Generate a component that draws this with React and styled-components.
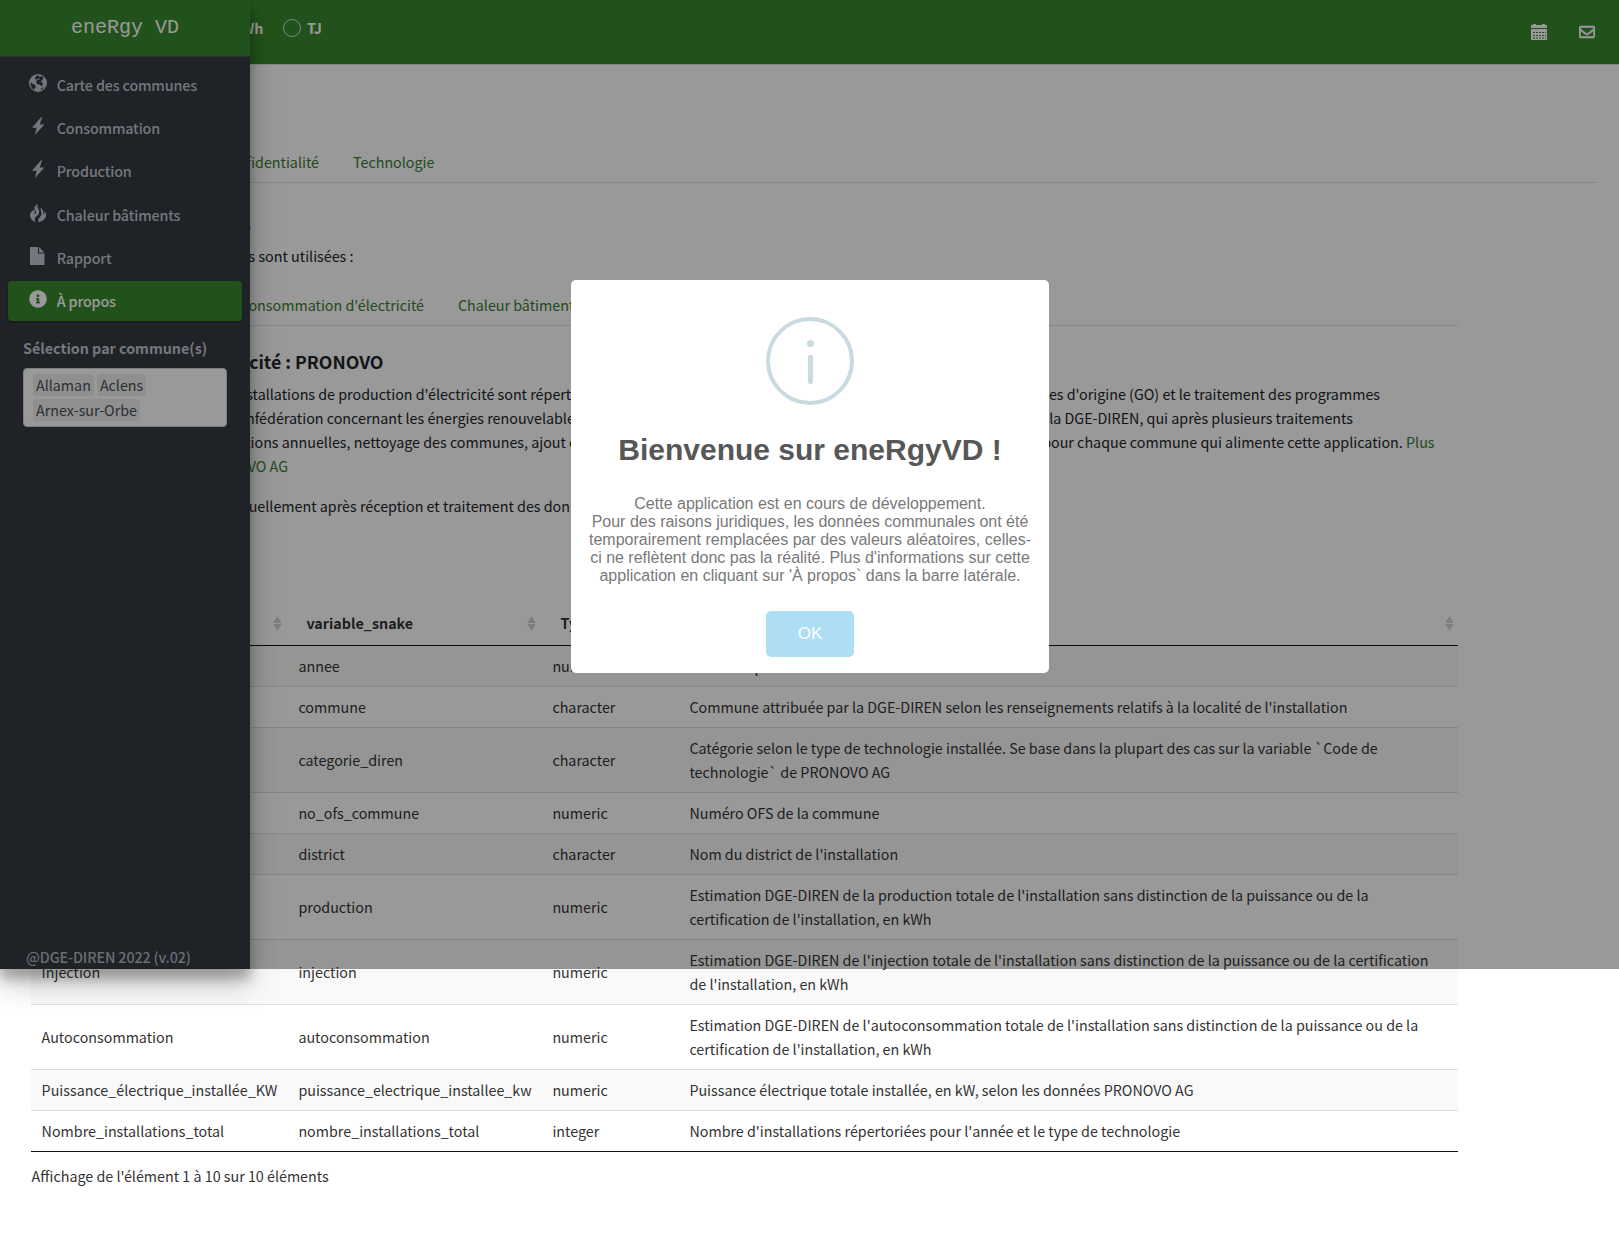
import React from 'react';
import styled, { createGlobalStyle, css } from 'styled-components';
import { FaInfoCircle, FaRegEnvelope } from 'react-icons/fa';

const green = '#3a892d';
const linkGreen = '#3a7c30';
const sans = '"Noto Sans CJK SC", "Noto Sans", sans-serif';

const GlobalStyle = createGlobalStyle`
  *, *::before, *::after { box-sizing: border-box; }
  body { margin: 0; background: #fff; }
`;

const Page = styled.div`
  position: relative;
  width: 100%;
  height: 1250px;
  overflow: hidden;
  font-family: ${sans};
  font-size: 14.3px;
  line-height: 24px;
  color: #212529;
`;

/* Top bar */
const TopBar = styled.header`
  display: flex;
  justify-content: space-between;
  align-items: center;
  height: 65px;
  padding: 0 24px 0 16px;
  background: ${green};
  border-bottom: 1px solid #dee2e6;
  color: #fff;
`;

const UnitGroup = styled.div`
  display: flex;
  align-items: center;
  justify-content: flex-end;
  width: 306px;
  height: 24px;
  margin-bottom: 8px;
  font-weight: 700;
`;

const Unit = styled.label`
  display: flex;
  align-items: center;
  gap: 6px;
  & + & { margin-left: 19.5px; }
`;

const Radio = styled.span`
  width: 18px;
  height: 18px;
  border: 1px solid #ddd;
  border-radius: 50%;
  background: ${(p) => (p.$checked ? '#fff' : 'transparent')};
`;

const BarLinks = styled.div`
  display: flex;
  align-items: center;
  gap: 32px;
  height: 18px;
  svg { display: block; }
`;

const MailIcon = styled(FaRegEnvelope)`
  width: 16px;
  height: 16px;
  stroke: #fff;
  stroke-width: 18px;
`;

/* Page content */
const Content = styled.main`
  padding: 76px 22px 0 16px;
`;

const Tabs = styled.nav`
  display: flex;
  height: 42px;
  border-bottom: 1px solid #dee2e6;
`;

const LeadTabs = styled.div`
  display: flex;
  flex: none;
  justify-content: flex-end;
  width: ${(p) => p.$width}px;
`;

const Tab = styled.a`
  padding: 8px 16px;
  border: 1px solid transparent;
  border-bottom: 0;
  white-space: nowrap;
  color: ${linkGreen};
`;

const Section = styled.section`
  width: 1442px;
  padding: ${(p) => p.$top}px 0 0 15px;
`;

const Title = styled.h4`
  display: flex;
  justify-content: flex-end;
  width: 220px;
  margin: 0 0 8px;
  font-size: 21px;
  font-weight: 500;
  line-height: 28px;
  white-space: nowrap;
  color: #3c8dbc;
`;

const Line = styled.div`
  display: flex;
  justify-content: space-between;
  width: ${(p) => p.$width}px;
  height: 24px;
  white-space: nowrap;
`;

const Start = styled.span`
  display: flex;
  flex: none;
  justify-content: flex-end;
  width: ${(p) => p.$width}px;
`;

const Rest = styled.span`
  flex: 1;
  width: 0;
  overflow: hidden;
  white-space: pre;
`;

const Link = styled.a`
  color: ${linkGreen};
`;

const Subtitle = styled.h5`
  display: flex;
  justify-content: flex-end;
  width: 352.5px;
  margin: 23px 0 9px;
  font-size: 17.7px;
  font-weight: 700;
  line-height: 24px;
  white-space: nowrap;
`;

const Paragraph = styled.div`
  margin-bottom: 16px;
`;

/* Data table */
const Table = styled.div`
  width: 1427px;
  margin-top: 83px;
  border-bottom: 1px solid #111;
  color: #333;
`;

const rowGrid = css`
  display: grid;
  grid-template-columns: 257.4px 254px 137px 778.6px;
`;

const HeadRow = styled.div`
  ${rowGrid}
  height: 45px;
  border-bottom: 1px solid #111;
  font-weight: 700;
`;

const HeadCell = styled.div`
  display: flex;
  align-items: center;
  justify-content: space-between;
  padding: 0 5px 0 18px;
  &:last-child { padding-right: 3px; }
`;

const Row = styled.div`
  ${rowGrid}
  align-items: center;
  background: ${(p) => (p.$odd ? '#f9f9f9' : '#fff')};
  & + & { border-top: 1px solid #ddd; }
`;

const Cell = styled.div`
  padding: 8px 10px;
  white-space: pre-line;
  &:first-child { padding: 8px 9px 8px 10.6px; }
`;

const TableInfo = styled.div`
  margin-top: 12px;
  padding-left: 0.6px;
  color: #333;
`;

/* Sidebar */
const Sidebar = styled.aside`
  position: absolute;
  top: 0;
  left: 0;
  display: flex;
  flex-direction: column;
  width: 250px;
  height: 969px;
  background: #343a40;
  color: #c2c7d0;
  box-shadow: 0 14px 28px rgba(0, 0, 0, 0.25), 0 10px 10px rgba(0, 0, 0, 0.22);
`;

const Brand = styled.div`
  height: 57px;
  padding-top: 16px;
  background: ${green};
  border-bottom: 1px solid #4b545c;
  color: #fff;
  font: 20px/24px "Courier New", "Liberation Mono", monospace;
  text-align: center;
`;

const Menu = styled.nav`
  display: flex;
  flex-direction: column;
  gap: 3.2px;
  padding: 8px 8px 0;
`;

const MenuItem = styled.a`
  display: flex;
  align-items: flex-start;
  gap: 9.7px;
  height: 40px;
  padding: 8px 16px 8px 21px;
  border-radius: 4px;
  color: ${(p) => (p.$active ? '#fff' : 'inherit')};
  background: ${(p) => (p.$active ? green : 'transparent')};
  box-shadow: ${(p) => (p.$active ? '0 1px 3px rgba(0,0,0,.12), 0 1px 2px rgba(0,0,0,.24)' : 'none')};
  font-weight: 500;
  letter-spacing: -0.14px;
  svg { flex: none; width: 18px; height: 18px; margin-top: 1px; }
`;

const Picker = styled.div`
  padding: 15px 23px 0;
`;

const PickerLabel = styled.div`
  height: 32px;
  font-weight: 700;
`;

const PickerBox = styled.div`
  display: flex;
  flex-wrap: wrap;
  align-content: flex-start;
  gap: 3px;
  width: 204px;
  height: 59px;
  padding: 5px 9px;
  border: 1px solid #ced4da;
  border-radius: 4px;
  background: #fff;
`;

const Tag = styled.span`
  height: 22px;
  padding: 0 3px;
  border-radius: 3px;
  background: #efefef;
  color: #495057;
  line-height: 22px;
`;

const Version = styled.div`
  margin-top: auto;
  padding: 0 0 0 26px;
  font-weight: 500;
  letter-spacing: -0.12px;
  color: #b3b8c0;
`;

/* Welcome dialog */
const Overlay = styled.div`
  position: absolute;
  top: 0;
  left: 0;
  width: 100%;
  height: 969px;
  background: rgba(0, 0, 0, 0.4);
`;

const Dialog = styled.div`
  position: absolute;
  top: 280px;
  left: 571px;
  display: flex;
  flex-direction: column;
  align-items: center;
  width: 478px;
  height: 393px;
  padding-top: 37px;
  border-radius: 5px;
  background: #fff;
  font-family: "Liberation Sans", Arial, sans-serif;
  text-align: center;
`;

const InfoMark = styled.div`
  display: flex;
  flex-direction: column;
  align-items: center;
  width: 88px;
  height: 88px;
  padding-top: 19px;
  border: 4px solid #c9dae1;
  border-radius: 50%;
  &::before {
    content: '';
    width: 7px;
    height: 7px;
    margin-left: 1px;
    border-radius: 50%;
    background: #c9dae1;
  }
  &::after {
    content: '';
    width: 5px;
    height: 29px;
    margin: 8px 0 0 1px;
    border-radius: 2px;
    background: #c9dae1;
  }
`;

const DialogTitle = styled.h2`
  margin: 25px 0;
  color: #575757;
  font-size: 30px;
  font-weight: 600;
  line-height: 40px;
`;

const DialogText = styled.p`
  margin: 0 0 26px;
  color: #797979;
  font-size: 16px;
  line-height: 18px;
  white-space: nowrap;
`;

const OkButton = styled.button`
  width: 88px;
  height: 46px;
  padding: 0;
  border: 0;
  border-radius: 5px;
  background: #aedef4;
  color: #fff;
  font: 17px "Liberation Sans", Arial, sans-serif;
`;

const GlobeIcon = () => (
  <svg viewBox="0 0 18 18">
    <path
      fill="currentColor"
      fillRule="evenodd"
      d="M9 0a9 9 0 1 0 0 18A9 9 0 0 0 9 0Zm-2 1.9 2-.6 1.4.5-.4.9 1.3.3.8-.9 1.6.7 1.3 1.2-1.3.2.3 1.4-1.4.9-.8 1.8 1.5.3.7 1.2-.4 1.6-1.8.3-.9-1.2-2.3.1-1.4-1.5.3-2.3 1.6-1.2 1.3.2.4-1-1.9-.3-1 .9-1.6.1-.2-1.5L7 1.9Zm-5.2 6.3 1.6 1.5 2.1.9 1.4 1.6-.5 1.5-1 .7-.3 1.5A8 8 0 0 1 1.8 8.200Zm11.9 5.8 1.6-1.3-1 1.9-1.8 1.3-1.1.1.9-1.4Z"
    />
  </svg>
);

const FlashIcon = () => (
  <svg viewBox="0 0 18 18">
    <path fill="currentColor" d="M12.3 0 3 10.700h4.700L5.900 18 15.400 7.400h-4.600L13 .3Z" />
  </svg>
);

const FireIcon = () => (
  <svg viewBox="0 0 18 18">
    <path
      fill="currentColor"
      d="M8.700 0C5.600 1.300 4.700 4 6.200 6.600 7.400 8.700 7.300 9.800 6.600 10.300 5.500 9.500 5.300 7.600 5.500 5.800 3 6.300 1 8.700 1 11.500c0 3.200 2.200 5.600 5.400 6.500C5 15.300 5.600 13.700 7.700 12 10.300 9.900 10.900 8 9.500 5.300 8.500 3.500 7.900 2 8.700 0ZM11.700 3.500c-.5 2 .6 3.700.8 5.500.3 2.500-1.300 3.600-2.500 5.200-.9 1.300-1 2.600-.6 3.800 4.200-.4 7.600-3 7.600-7 0-1.500-.6-2.800-1.500-3.800.1 1.500-.3 2.700-1.200 3.100.4-2.500-.6-5.200-2.600-6.800Z"
    />
  </svg>
);

const FileIcon = () => (
  <svg viewBox="0 0 18 18">
    <path fill="currentColor" d="M1 0h8v6.500h6.500V18H1ZM10 0l5.500 5.500H10Z" />
  </svg>
);

const CalendarIcon = () => (
  <svg width="16" height="16" viewBox="0 0 16 16">
    <path
      fill="#fff"
      fillRule="evenodd"
      d="M0 1h2V0h3v1h6V0h3v1h2v3H0ZM0 5h16v11H0ZM2 8v1h2V8Zm3 0v1h2V8Zm3 0v1h2V8Zm3 0v1h2V8Zm3 0v1h1V8ZM2 11v1h2v-1Zm3 0v1h2v-1Zm3 0v1h2v-1Zm3 0v1h2v-1Zm3 0v1h1v-1ZM2 13.500v1h2v-1Zm3 0v1h2v-1Zm3 0v1h2v-1Zm3 0v1h2v-1Zm3 0v1h1v-1Z"
    />
  </svg>
);

const SortIcon = () => (
  <svg width="11" height="15" viewBox="0 0 11 15">
    <path fill="#d3d3d3" d="M5.500 0 9.700 7H1.300ZM1.300 8h8.400L5.500 15Z" />
  </svg>
);

const menu = [
  ['Carte des communes', GlobeIcon],
  ['Consommation', FlashIcon],
  ['Production', FlashIcon],
  ['Chaleur bâtiments', FireIcon],
  ['Rapport', FileIcon],
  ['À propos', FaInfoCircle],
];

const columns = ['Variable', 'variable_snake', 'Type', 'Description'];

const rows = [
  ['Année', 'annee', 'numeric', 'Année de production'],
  ['Commune', 'commune', 'character', "Commune attribuée par la DGE-DIREN selon les renseignements relatifs à la localité de l'installation"],
  ['Catégorie_DIREN', 'categorie_diren', 'character', 'Catégorie selon le type de technologie installée. Se base dans la plupart des cas sur la variable `Code de\ntechnologie` de PRONOVO AG'],
  ['No_OFS_Commune', 'no_ofs_commune', 'numeric', 'Numéro OFS de la commune'],
  ['District', 'district', 'character', "Nom du district de l'installation"],
  ['Production', 'production', 'numeric', "Estimation DGE-DIREN de la production totale de l'installation sans distinction de la puissance ou de la\ncertification de l'installation, en kWh"],
  ['Injection', 'injection', 'numeric', "Estimation DGE-DIREN de l'injection totale de l'installation sans distinction de la puissance ou de la certification\nde l'installation, en kWh"],
  ['Autoconsommation', 'autoconsommation', 'numeric', "Estimation DGE-DIREN de l'autoconsommation totale de l'installation sans distinction de la puissance ou de la\ncertification de l'installation, en kWh"],
  ['Puissance_électrique_installée_KW', 'puissance_electrique_installee_kw', 'numeric', 'Puissance électrique totale installée, en kW, selon les données PRONOVO AG'],
  ['Nombre_installations_total', 'nombre_installations_total', 'integer', "Nombre d'installations répertoriées pour l'année et le type de technologie"],
];

export default function App() {
  return (
    <Page>
      <GlobalStyle />
      <TopBar>
        <UnitGroup>
          <Unit><Radio $checked />kWh</Unit>
          <Unit><Radio />TJ</Unit>
        </UnitGroup>
        <BarLinks>
          <CalendarIcon />
          <MailIcon />
        </BarLinks>
      </TopBar>

      <Content>
        <Tabs>
          <LeadTabs $width={320}>
            <Tab>Données</Tab>
            <Tab>Confidentialité</Tab>
          </LeadTabs>
          <Tab>Technologie</Tab>
        </Tabs>

        <Section $top={25}>
          <Title>Sources de données</Title>
          <Line $width={322.5}>
            <Start $width={322.5}>Les sources de données suivantes sont utilisées :</Start>
          </Line>
        </Section>

        <Section $top={16}>
          <Tabs>
            <LeadTabs $width={410}>
              <Tab>Production d'électricité</Tab>
              <Tab>Consommation d'électricité</Tab>
            </LeadTabs>
            <Tab>Chaleur bâtiments</Tab>
          </Tabs>
          <Subtitle>Production d'électricité : PRONOVO</Subtitle>
          <Paragraph>
            <Line $width={1349}>
              <Start $width={496}>Les données des installations de production d'électricité sont</Start>
              <Rest> répertoriées par PRONOVO AG</Rest>
              <span>garanties d'origine (GO) et le traitement des programmes</span>
            </Line>
            <Line $width={1322}>
              <Start $width={453}>d'encouragement de la Confédération concernant les énergies</Start>
              <Rest> renouvelables</Rest>
              <span>données à la DGE-DIREN, qui après plusieurs traitements</span>
            </Line>
            <Line $width={1403.5}>
              <Start $width={497}>(calcul des productions annuelles, nettoyage des communes,</Start>
              <Rest> ajout de variables</Rest>
              <span>données pour chaque commune qui alimente cette application. <Link>Plus</Link></span>
            </Line>
            <Line $width={257}>
              <Start $width={257}><Link>d'informations sur PRONOVO AG</Link></Start>
            </Line>
          </Paragraph>
          <Paragraph>
            <Line $width={800}>
              <Start $width={509.5}>Les données sont mises à jour annuellement après réception et traitement des</Start>
              <Rest> données</Rest>
            </Line>
          </Paragraph>

          <Table>
            <HeadRow>
              {columns.map((name) => (
                <HeadCell key={name}>{name}<SortIcon /></HeadCell>
              ))}
            </HeadRow>
            {rows.map((row, i) => (
              <Row key={row[1]} $odd={i % 2 === 0}>
                {row.map((value, j) => <Cell key={j}>{value}</Cell>)}
              </Row>
            ))}
          </Table>
          <TableInfo>Affichage de l'élément 1 à 10 sur 10 éléments</TableInfo>
        </Section>
      </Content>

      <Sidebar>
        <Brand>eneRgy VD</Brand>
        <Menu>
          {menu.map(([label, Icon]) => (
            <MenuItem key={label} $active={label === 'À propos'}>
              <Icon />
              {label}
            </MenuItem>
          ))}
        </Menu>
        <Picker>
          <PickerLabel>Sélection par commune(s)</PickerLabel>
          <PickerBox>
            <Tag>Allaman</Tag>
            <Tag>Aclens</Tag>
            <Tag>Arnex-sur-Orbe</Tag>
          </PickerBox>
        </Picker>
        <Version>@DGE-DIREN 2022 (v.02)</Version>
      </Sidebar>

      <Overlay />
      <Dialog>
        <InfoMark />
        <DialogTitle>Bienvenue sur eneRgyVD !</DialogTitle>
        <DialogText>
          Cette application est en cours de développement.<br />
          Pour des raisons juridiques, les données communales ont été<br />
          temporairement remplacées par des valeurs aléatoires, celles-<br />
          ci ne reflètent donc pas la réalité. Plus d'informations sur cette<br />
          application en cliquant sur 'À propos` dans la barre latérale.
        </DialogText>
        <OkButton>OK</OkButton>
      </Dialog>
    </Page>
  );
}
